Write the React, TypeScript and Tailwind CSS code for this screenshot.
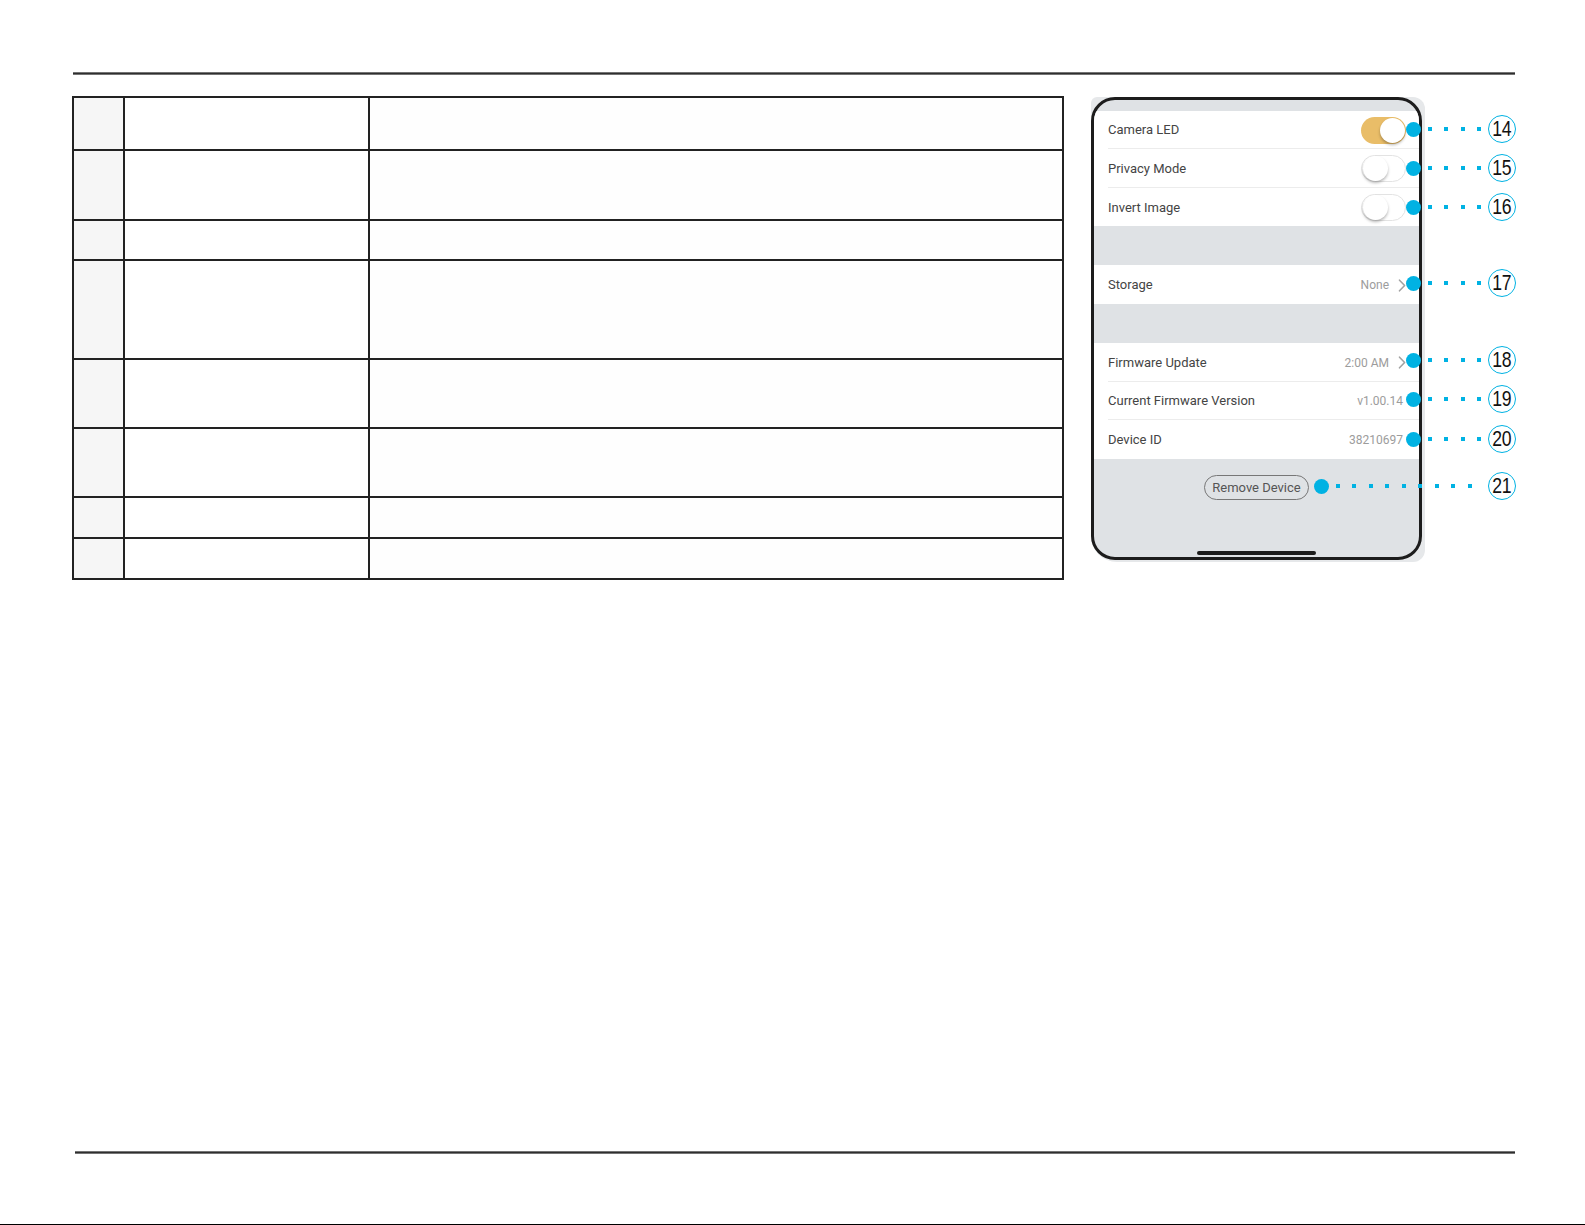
const rows = [
  "h-[53px] border-b-2",
  "h-[70px] border-b-2",
  "h-[40px] border-b-2",
  "h-[99px] border-b-2",
  "h-[69px] border-b-2",
  "h-[69px] border-b-2",
  "h-[41px] border-b-2",
  "h-[39px]",
];

const callouts = [
  { num: "14", pos: "top-[18px] left-[315px]", dots: 4, tail: "ml-[7px]" },
  { num: "15", pos: "top-[57px] left-[315px]", dots: 4, tail: "ml-[7px]" },
  { num: "16", pos: "top-[96px] left-[315px]", dots: 4, tail: "ml-[7px]" },
  { num: "17", pos: "top-[172px] left-[315px]", dots: 4, tail: "ml-[7px]" },
  { num: "18", pos: "top-[249px] left-[315px]", dots: 4, tail: "ml-[7px]" },
  { num: "19", pos: "top-[288px] left-[315px]", dots: 4, tail: "ml-[7px]" },
  { num: "20", pos: "top-[328px] left-[315px]", dots: 4, tail: "ml-[7px]" },
  { num: "21", pos: "top-[375px] left-[223px]", dots: 9, tail: "ml-[16px]" },
];

function Rule({ className }: { className: string }) {
  return (
    <div className={`h-[3px] bg-linear-to-b from-[#9a9a9a] via-[#2e2e2e] to-[#9a9a9a] ${className}`} />
  );
}

function Toggle({ on }: { on?: boolean }) {
  return (
    <div
      className={`w-[45px] h-[27px] rounded-full flex items-center px-px ${
        on ? "bg-[#e9bd68] justify-end" : "bg-white border border-[#e3e3e3] justify-start"
      }`}
    >
      <div className="w-[25px] h-[25px] rounded-full bg-white shadow-[0_2px_3px_rgba(0,0,0,0.28)]" />
    </div>
  );
}

function Chevron() {
  return (
    <svg width="8" height="13" viewBox="0 0 8 13" className="ml-[9px] mr-[-3px]">
      <path d="M1.5 1.2 L6.6 6.5 L1.5 11.8" fill="none" stroke="#a3a3a3" strokeWidth="1.6" strokeLinecap="round" strokeLinejoin="round" />
    </svg>
  );
}

function Row({
  label,
  h,
  divider,
  children,
}: {
  label: string;
  h: string;
  divider?: boolean;
  children?: React.ReactNode;
}) {
  return (
    <div className={`bg-white pl-[14px] ${h}`}>
      <div className={`h-full flex items-center justify-between pr-[13px] pt-px ${divider ? "border-b border-[#ececec]" : ""}`}>
        <span className="text-[13px] text-[#444]">{label}</span>
        {children}
      </div>
    </div>
  );
}

function Value({ text, chevron }: { text: string; chevron?: boolean }) {
  return (
    <div className="flex items-center pr-[3px]">
      <span className="text-[12px] text-[#9c9c9c]">{text}</span>
      {chevron && <Chevron />}
    </div>
  );
}

function Callout({ num, pos, dots, tail }: { num: string; pos: string; dots: number; tail: string }) {
  return (
    <div className={`absolute flex items-center ${pos}`}>
      <div className="w-[15px] h-[15px] rounded-full bg-[#00b2e3]" />
      <div className="flex gap-[12.5px] ml-[6.5px]">
        {Array.from({ length: dots }).map((_, i) => (
          <div key={i} className="w-[4px] h-[4px] bg-[#00b2e3]" />
        ))}
      </div>
      <div
        className={`w-[28px] h-[28px] rounded-full border-[1.5px] border-[#00b2e3] bg-white flex items-center justify-center ${tail}`}
      >
        <span className="font-['Liberation_Sans',Arial,sans-serif] text-[22px] leading-none text-[#111] scale-x-[0.8] tracking-[-0.5px]">
          {num}
        </span>
      </div>
    </div>
  );
}

export default function App() {
  return (
    <div className="w-[1585px] h-[1225px] bg-white flex flex-col font-['Roboto',sans-serif] overflow-hidden">
      <div className="pt-[72px]">
        <Rule className="ml-[73px] w-[1442px]" />
      </div>

      <div className="flex items-start mt-[21px]">
        {/* table */}
        <div className="ml-[72px] w-[992px] border-2 border-[#222]">
          {rows.map((r, i) => (
            <div key={i} className={`grid grid-cols-[51px_245px_1fr] border-[#222] ${r}`}>
              <div className="bg-[#f6f6f6] border-r-2 border-[#222]" />
              <div className="border-r-2 border-[#222]" />
              <div className="bg-[#fefefe]" />
            </div>
          ))}
        </div>

        {/* phone */}
        <div className="relative ml-[27px] mt-px w-[334px] h-[465px] bg-[#e6e8ea] rounded-tl-[6px] rounded-tr-[12px] rounded-br-[12px] rounded-bl-[26px] pr-[3px] pb-[2px]">
          <div className="w-[331px] h-[463px] border-[3px] border-[#1c1c1c] rounded-[24px] overflow-hidden bg-[#dfe2e5] flex flex-col">
            <div className="h-[11px] shrink-0" />
            <Row label="Camera LED" h="h-[38px]" divider>
              <Toggle on />
            </Row>
            <Row label="Privacy Mode" h="h-[39px]" divider>
              <Toggle />
            </Row>
            <Row label="Invert Image" h="h-[38px]">
              <Toggle />
            </Row>
            <div className="h-[39px] shrink-0" />
            <Row label="Storage" h="h-[39px]">
              <Value text="None" chevron />
            </Row>
            <div className="h-[39px] shrink-0" />
            <Row label="Firmware Update" h="h-[39px]" divider>
              <Value text="2:00 AM" chevron />
            </Row>
            <Row label="Current Firmware Version" h="h-[38px]" divider>
              <Value text="v1.00.14" />
            </Row>
            <Row label="Device ID" h="h-[39px]">
              <Value text="38210697" />
            </Row>
            <div className="flex-1 flex flex-col items-center pt-[16px] pb-[2px]">
              <div className="h-[25px] px-[7px] rounded-full border border-[#777] flex items-center text-[13px] text-[#555]">
                Remove Device
              </div>
              <div className="mt-auto w-[119px] h-[4px] rounded-full bg-[#1c1c1c]" />
            </div>
          </div>

          {callouts.map((c) => (
            <Callout key={c.num} {...c} />
          ))}
        </div>
      </div>

      <div className="mt-auto">
        <Rule className="ml-[75px] w-[1440px] mb-[70px]" />
        <div className="h-px w-full bg-black" />
      </div>
    </div>
  );
}
